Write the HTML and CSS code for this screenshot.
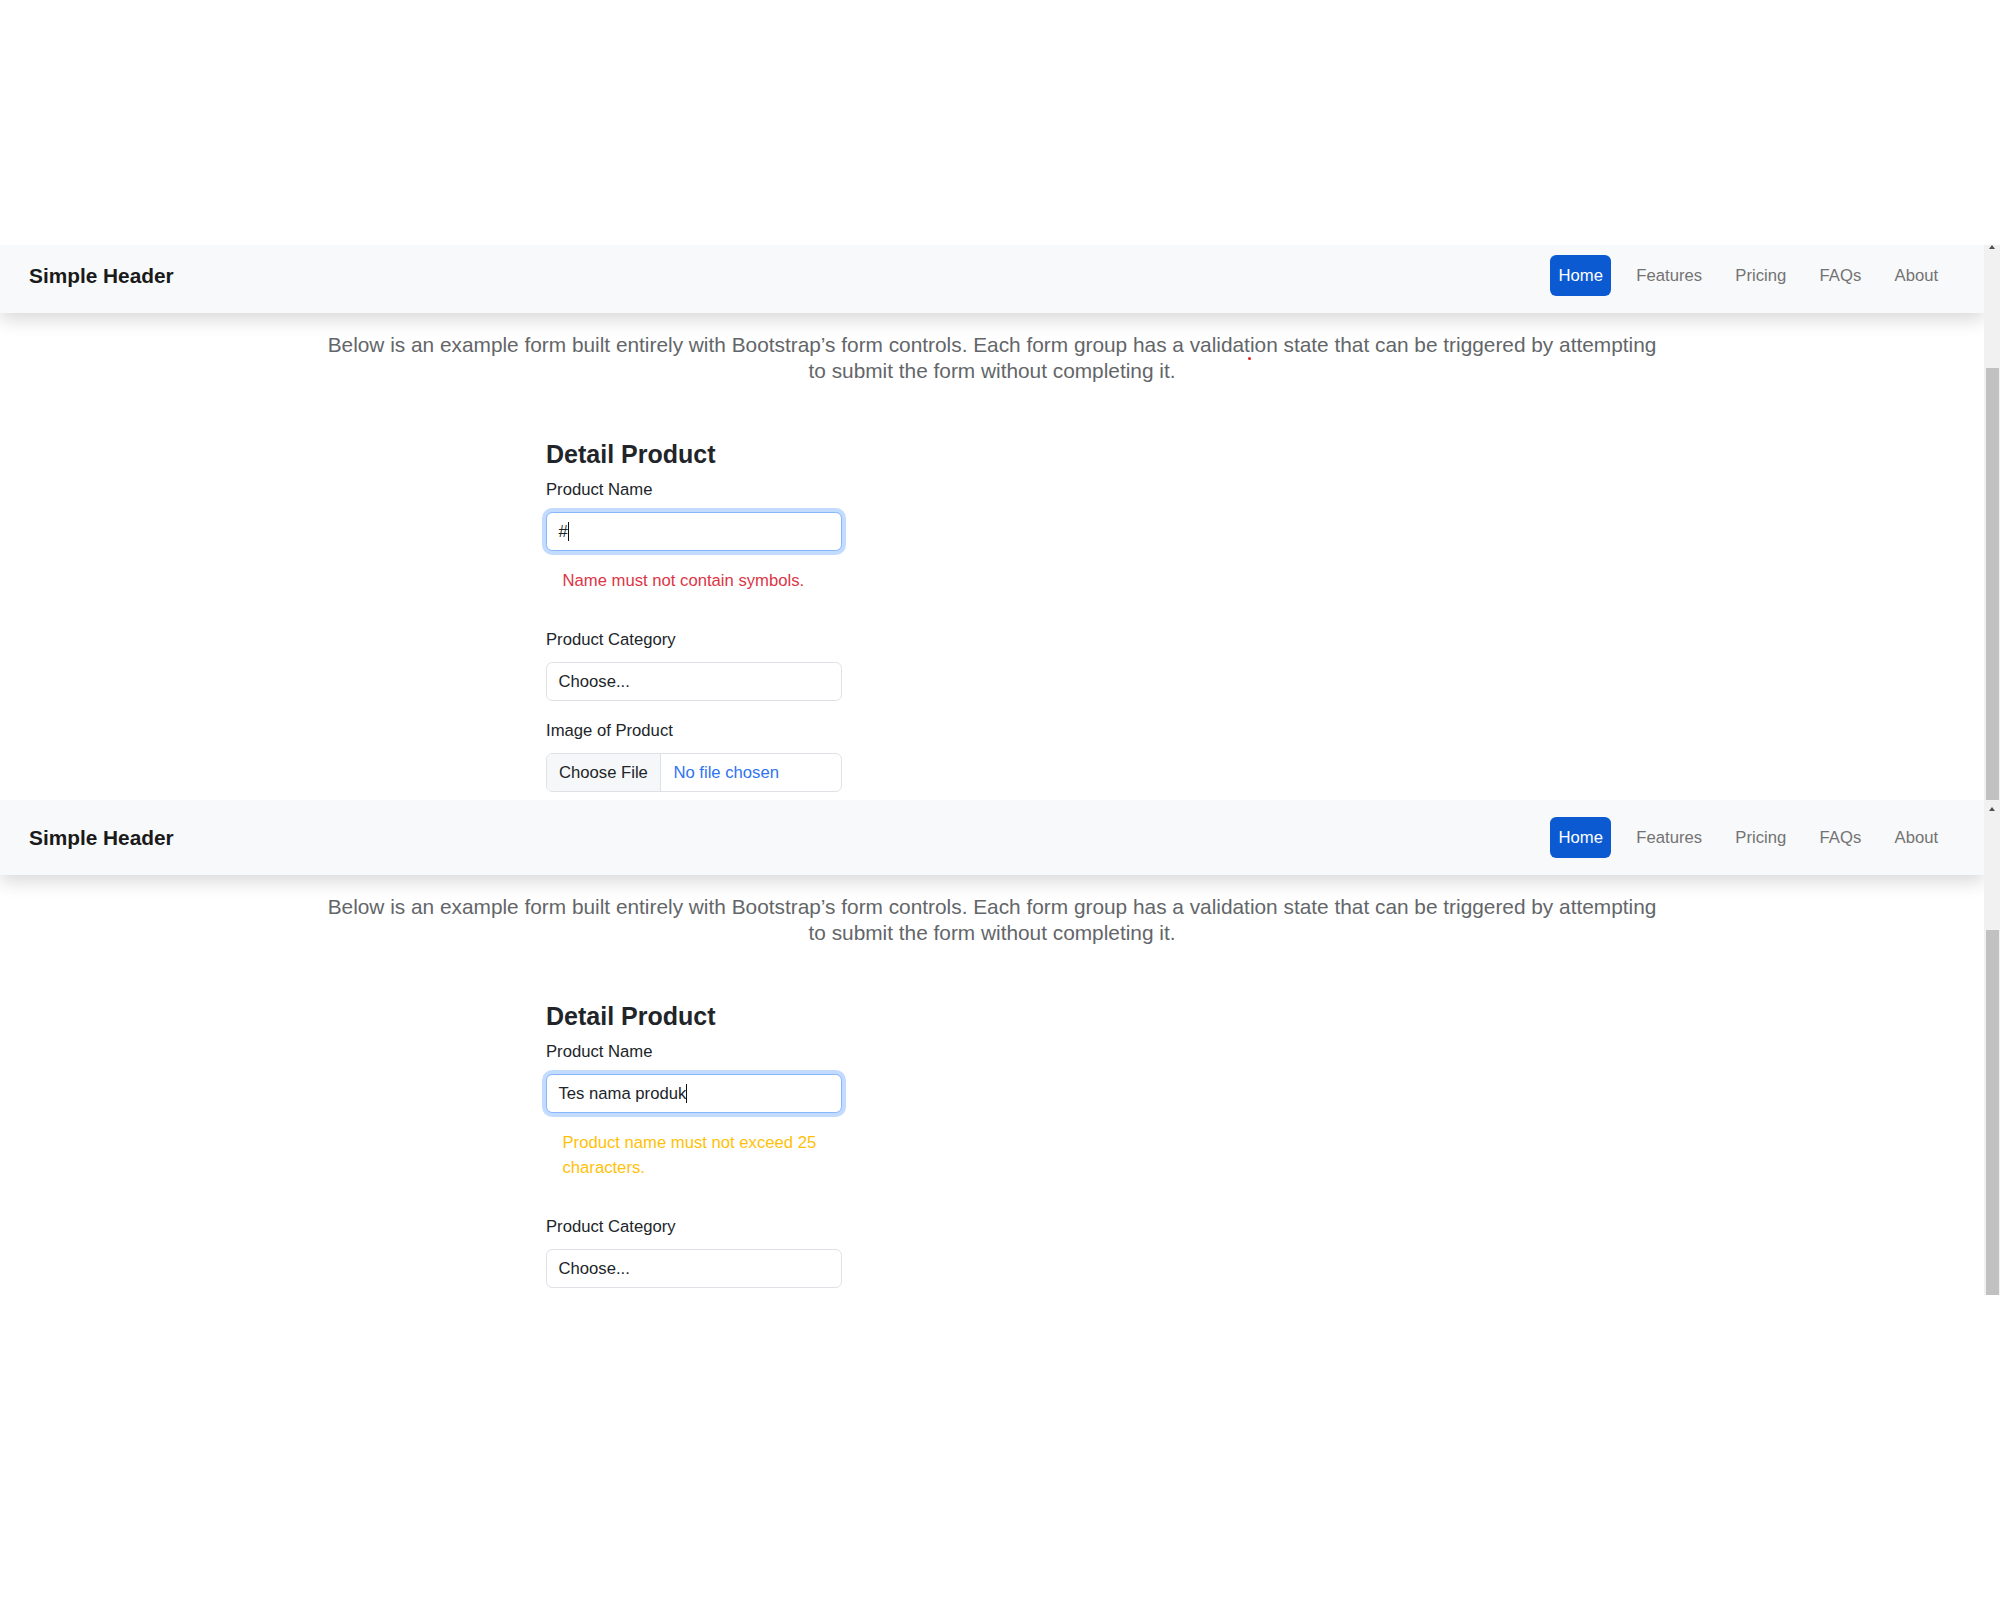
FILE: index.html
```html
<!DOCTYPE html>
<html lang="en">
<head>
<meta charset="utf-8">
<title>Simple Header – Detail Product</title>
<link rel="stylesheet" href="styles.css">
</head>
<body>
<div class="top-gap"></div>

<section class="viewport viewport-a">
  <div class="frame">
    <div class="screen">
      <header class="site-header">
        <span class="brand">Simple Header</span>
        <ul class="nav">
          <li><a class="active" href="#">Home</a></li>
          <li><a href="#">Features</a></li>
          <li><a href="#">Pricing</a></li>
          <li><a href="#">FAQs</a></li>
          <li><a href="#">About</a></li>
        </ul>
      </header>
      <p class="intro">Below is an example form built entirely with Bootstrap’s form controls. Each form group has a validat<span class="mark"></span>ion state that can be triggered by attempting to submit the form without completing it.</p>
      <form class="product-form">
        <h4 class="form-title">Detail Product</h4>
        <div class="group">
          <label class="field-label">Product Name</label>
          <div class="control focus">#<span class="caret"></span></div>
          <div class="feedback invalid">Name must not contain symbols.</div>
        </div>
        <div class="group">
          <label class="field-label">Product Category</label>
          <div class="control">Choose...</div>
        </div>
        <div class="group">
          <label class="field-label">Image of Product</label>
          <div class="control file"><span class="file-btn">Choose File</span><span class="file-name">No file chosen</span></div>
        </div>
      </form>
    </div>
    <div class="scrollbar"><span class="sb-up"></span><span class="sb-thumb"></span></div>
  </div>
</section>

<section class="viewport viewport-b">
  <div class="frame">
    <div class="screen">
      <header class="site-header">
        <span class="brand">Simple Header</span>
        <ul class="nav">
          <li><a class="active" href="#">Home</a></li>
          <li><a href="#">Features</a></li>
          <li><a href="#">Pricing</a></li>
          <li><a href="#">FAQs</a></li>
          <li><a href="#">About</a></li>
        </ul>
      </header>
      <p class="intro">Below is an example form built entirely with Bootstrap’s form controls. Each form group has a validation state that can be triggered by attempting to submit the form without completing it.</p>
      <form class="product-form">
        <h4 class="form-title">Detail Product</h4>
        <div class="group">
          <label class="field-label">Product Name</label>
          <div class="control focus">Tes nama produk<span class="caret"></span></div>
          <div class="feedback warning">Product name must not exceed 25 characters.</div>
        </div>
        <div class="group">
          <label class="field-label">Product Category</label>
          <div class="control">Choose...</div>
        </div>
      </form>
    </div>
    <div class="scrollbar"><span class="sb-up"></span><span class="sb-thumb"></span></div>
  </div>
</section>
</body>
</html>
```

FILE: styles.css
```css
* { box-sizing: border-box; }

html, body {
  margin: 0;
  padding: 0;
  background: #fff;
}

body {
  font-family: "Liberation Sans", Arial, sans-serif;
  font-size: 16.67px;
  line-height: 25px;
  color: #212529;
}

.top-gap { height: 245px; }

.viewport { overflow: hidden; }
.viewport-a { height: 555px; }
.viewport-b { height: 495px; }

.frame { display: flex; }
.viewport-a .frame { margin-top: -7px; height: 562px; }
.viewport-b .frame { height: 495px; }

.screen {
  flex: 1;
  min-width: 0;
  overflow: hidden;
  background: #fff;
}

/* scrollbar */
.scrollbar {
  width: 16px;
  flex: none;
  background: #f1f1f1;
  display: flex;
  flex-direction: column;
  align-items: center;
  overflow: hidden;
}
.sb-up {
  width: 0;
  height: 0;
  margin-top: 7px;
  border-left: 3.5px solid transparent;
  border-right: 3.5px solid transparent;
  border-bottom: 4px solid #505050;
  flex: none;
}
.sb-thumb {
  align-self: stretch;
  flex: none;
  height: 1200px;
  margin: 118.5px 1px 0 2px;
  background: #c1c1c1;
}

/* header */
.site-header {
  position: relative;
  z-index: 1;
  height: 75px;
  display: flex;
  align-items: center;
  justify-content: space-between;
  padding: 0 37.6px 0 29px;
  background: #f8f9fa;
  box-shadow: 0 8.33px 16.67px rgba(0, 0, 0, 0.15);
}
.brand {
  font-size: 20.83px;
  font-weight: 700;
  color: #1a1a1a;
}
.nav {
  display: flex;
  gap: 16.67px;
  list-style: none;
  margin: 0;
  padding: 0;
}
.nav a {
  display: block;
  padding: 8.33px;
  line-height: 25px;
  color: #737373;
  text-decoration: none;
  border-radius: 6.25px;
}
.nav a.active {
  background: #0b5ad2;
  color: #fff;
}

/* intro */
.intro {
  max-width: 1340px;
  margin: 18.8px auto 0;
  text-align: center;
  font-size: 20.83px;
  line-height: 25.8px;
  color: #636669;
}
.mark {
  position: relative;
  display: inline-block;
  width: 0;
  height: 0;
}
.mark::after {
  content: "";
  position: absolute;
  left: -2px;
  top: 5px;
  width: 3px;
  height: 3px;
  border-radius: 50%;
  background: #e0201c;
}

/* form */
.product-form {
  width: 296px;
  margin: 55.2px 0 0 546px;
}
.form-title {
  margin: 0 0 8.33px;
  font-size: 25px;
  line-height: 30px;
  font-weight: 700;
  color: #212529;
}
.field-label {
  display: block;
  margin-bottom: 10px;
}
.group { margin-bottom: 16.5px; }

.control {
  height: 39px;
  display: flex;
  align-items: center;
  padding: 0 11.5px;
  border: 1px solid #dee2e6;
  border-radius: 6.25px;
  background: #fff;
  color: #212529;
  white-space: nowrap;
}
.control.focus {
  border-color: #86b7fe;
  box-shadow: 0 0 0 4px rgba(13, 110, 253, 0.25);
}
.caret {
  display: inline-block;
  width: 1px;
  height: 19px;
  background: #111;
}

.control.file {
  padding: 0;
  overflow: hidden;
}
.file-btn {
  height: 100%;
  display: flex;
  align-items: center;
  padding: 0 12px;
  background: #f6f7f8;
  border-right: 1px solid #dee2e6;
}
.file-name {
  padding-left: 12.5px;
  color: #2f74f0;
}

.feedback {
  margin: 17px 0 34.5px;
  padding: 0 16.5px;
}
.feedback.invalid { color: #dc3545; }
.feedback.warning { color: #ffc107; }
```
